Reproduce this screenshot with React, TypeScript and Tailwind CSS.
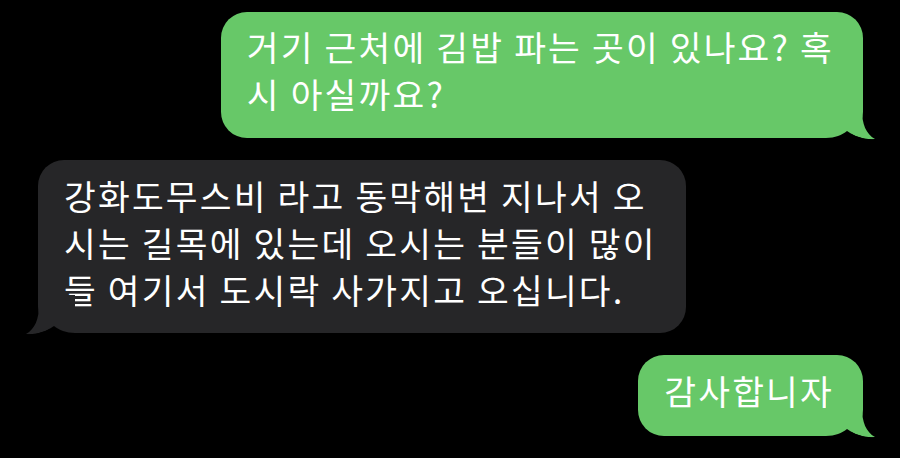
import React from "react";

type Msg = { from: "me" | "them"; lines: string[] };

const messages: Msg[] = [
  { from: "me", lines: ["거기 근처에 김밥 파는 곳이 있나요? 혹", "시 아실까요?"] },
  {
    from: "them",
    lines: [
      "강화도무스비 라고 동막해변 지나서 오",
      "시는 길목에 있는데 오시는 분들이 많이",
      "들 여기서 도시락 사가지고 오십니다.",
    ],
  },
  { from: "me", lines: ["감사합니자"] },
];

function Tail({ color, flip }: { color: string; flip?: boolean }) {
  // body edge sits at x=36, bubble bottom at y=38
  return (
    <svg
      width="50"
      height="40"
      viewBox="0 0 50 40"
      className={
        flip
          ? "absolute -left-[13px] -bottom-[2px] -scale-x-100"
          : "absolute -right-[13px] -bottom-[2px]"
      }
    >
      <path d="M0 0 H36 V10 C36 24 40 34 49 39 C40 40 29 37 21 31 C16 35 9 38 0 38 Z" fill={color} />
      <path d="M0 38 C9 38 16 35 21 31 C29 37 40 40 49 39 L49 40 L0 40 Z" fill="#000" />
    </svg>
  );
}

function Bubble({ msg, py }: { msg: Msg; py: string }) {
  const mine = msg.from === "me";
  const color = mine ? "#67c868" : "#262628";
  return (
    <div
      className={`relative rounded-[26px] pl-[26px] pr-[29px] ${py} ${
        mine ? "self-end mr-[37px] bg-[#67c868]" : "self-start ml-[38px] bg-[#262628]"
      }`}
    >
      {msg.lines.map((line, i) => (
        <div key={i} className="whitespace-nowrap text-[34.5px] leading-[47px] tracking-[2.2px] text-white">
          {line}
        </div>
      ))}
      <Tail color={color} flip={!mine} />
    </div>
  );
}

export default function App() {
  return (
    <div
      className="w-[900px] h-[458px] overflow-hidden bg-black flex flex-col gap-[22px] pt-[12px]"
      style={{ fontFamily: '"Noto Sans CJK KR", "Noto Sans", sans-serif' }}
    >
      <Bubble msg={messages[0]} py="pt-[11px] pb-[21px]" />
      <Bubble msg={messages[1]} py="pt-[12px] pb-[20px]" />
      <Bubble msg={messages[2]} py="pt-[12px] pb-[22px]" />
    </div>
  );
}
